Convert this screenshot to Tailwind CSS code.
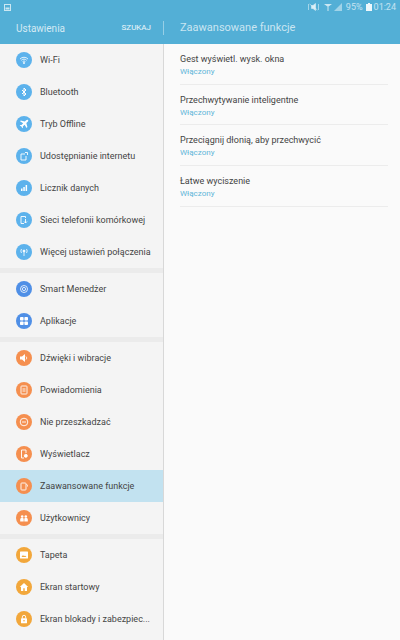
<!DOCTYPE html>
<html lang="pl">
<head>
    <meta charset="UTF-8">
    <meta name="viewport" content="width=device-width, initial-scale=1.0">
    <title>Ustawienia</title>
    <script src="https://cdn.jsdelivr.net/npm/@tailwindcss/browser@4"></script>
</head>
<body class="bg-[#fafafa] font-[Roboto,sans-serif] w-[400px] h-[640px] overflow-hidden">
    <!-- Header with status bar -->
    <div class="bg-[#53afd6] h-[44px] flex flex-col">
        <div class="h-[14px] flex items-center justify-between pl-1 pr-[4px]">
            <svg width="7" height="7" viewBox="0 0 7 7" class="opacity-70"><rect x="0.5" y="0.5" width="6" height="6" fill="none" stroke="#fff"/><rect x="1.5" y="3.5" width="4" height="2" fill="#fff"/></svg>
            <div class="flex items-center text-[9px] text-white/65 leading-none">
                <svg width="11" height="8" viewBox="0 0 11 8" class="mr-[5px]"><path d="M3.500 2.500h1.500L7.500 .5v7L5 5.500H3.500zM1.500 1l8 6M0.500 1v6M10.500 1v6" fill="#fff" stroke="#fff" stroke-width="0.6" opacity="0.8"/></svg>
                <svg width="8" height="8" viewBox="0 0 8 8" class="mr-[2px]"><path d="M0 1h8L4 4zM3.500 4h1v4h-1z" fill="#fff" opacity="0.7"/></svg>
                <svg width="8" height="8" viewBox="0 0 8 8" class="mr-[4px]"><path d="M0 8L8 0v8z" fill="#fff" opacity="0.45"/></svg>
                <span class="mr-[3px]">95%</span>
                <svg width="6" height="8" viewBox="0 0 6 8" class="mr-[2px]"><path d="M2 0h2v1h2v7H0V1h2z" fill="#fff" opacity="0.9"/></svg>
                <span>01:24</span>
            </div>
        </div>
        <div class="flex-1 flex items-center text-white">
            <div class="w-[164px] pl-4 pr-3 flex items-center justify-between h-[14px] border-r border-white/40 -mt-[2px]">
                <span class="text-[10px] text-white/75">Ustawienia</span>
                <span class="text-[8px] text-white/90">SZUKAJ</span>
            </div>
            <span class="pl-4 text-[11px] text-white/70 -mt-[2px]">Zaawansowane funkcje</span>
        </div>
    </div>

    <div class="flex h-[596px]">
        <!-- Sidebar list -->
        <div class="w-[164px] shrink-0 bg-[#f4f4f4] border-r border-[#d8d8d8] text-[9px] text-[#444444] overflow-hidden">
            <div class="h-[32px] flex items-center gap-2 pl-4">
                <span class="size-4 rounded-full bg-[#5cb2ec] flex items-center justify-center"><svg width="10" height="10" viewBox="0 0 10 10" fill="none" stroke="#fff" stroke-width="0.8"><path d="M1 4a5.500 5.500 0 0 1 8 0M2.300 5.300a3.700 3.700 0 0 1 5.400 0M3.600 6.600a2 2 0 0 1 2.800 0"/><circle cx="5" cy="8" r="0.6" fill="#fff"/></svg></span>
                <span class="mt-[2px]">Wi-Fi</span>
            </div>
            <div class="h-[32px] flex items-center gap-2 pl-4">
                <span class="size-4 rounded-full bg-[#5cb2ec] flex items-center justify-center"><svg width="10" height="10" viewBox="0 0 10 10" fill="none" stroke="#fff" stroke-width="1"><path d="M3 3l4 4-2 2V1l2 2-4 4"/></svg></span>
                <span class="mt-[2px]">Bluetooth</span>
            </div>
            <div class="h-[32px] flex items-center gap-2 pl-4">
                <span class="size-4 rounded-full bg-[#5cb2ec] flex items-center justify-center"><svg width="10" height="10" viewBox="0 0 10 10" fill="#fff"><path d="M9 1c-.5-.5-1.300-.3-1.800.2L5.800 2.600 1.800 1.500 1 2.300l3.200 2-1.700 1.800-1.200-.2-.6.6 1.700 1 1 1.700.6-.6-.2-1.200 1.800-1.700 2 3.200.8-.8-1.100-4 1.400-1.400C9.300 2.300 9.500 1.500 9 1z"/></svg></span>
                <span class="mt-[2px]">Tryb Offline</span>
            </div>
            <div class="h-[32px] flex items-center gap-2 pl-4">
                <span class="size-4 rounded-full bg-[#5cb2ec] flex items-center justify-center"><svg width="10" height="10" viewBox="0 0 10 10" fill="none" stroke="#fff" stroke-width="0.9"><path d="M6 3H2v6h5V5M6 1.500h2.500V4"/></svg></span>
                <span class="mt-[2px]">Udostępnianie internetu</span>
            </div>
            <div class="h-[32px] flex items-center gap-2 pl-4">
                <span class="size-4 rounded-full bg-[#5cb2ec] flex items-center justify-center"><svg width="10" height="10" viewBox="0 0 10 10" fill="#fff"><path d="M2 5.500h1.500V8H2zM4.300 4h1.500v4H4.300zM6.600 2h1.500v6H6.600z"/></svg></span>
                <span class="mt-[2px]">Licznik danych</span>
            </div>
            <div class="h-[32px] flex items-center gap-2 pl-4">
                <span class="size-4 rounded-full bg-[#5cb2ec] flex items-center justify-center"><svg width="10" height="10" viewBox="0 0 10 10" fill="none" stroke="#fff" stroke-width="0.9"><path d="M6.500 3V1.500h-4.500v7h3"/><path d="M6.500 4v4M5 6.500L6.500 8 8 6.500"/></svg></span>
                <span class="mt-[2px]">Sieci telefonii komórkowej</span>
            </div>
            <div class="h-[32px] flex items-center gap-2 pl-4">
                <span class="size-4 rounded-full bg-[#5cb2ec] flex items-center justify-center"><svg width="10" height="10" viewBox="0 0 10 10" fill="none" stroke="#fff" stroke-width="0.8"><circle cx="5" cy="4" r="1" fill="#fff"/><path d="M5 5v4M2.500 2a3.500 3.500 0 0 0 0 4M7.500 2a3.500 3.500 0 0 1 0 4"/></svg></span>
                <span class="mt-[2px]">Więcej ustawień połączenia</span>
            </div>

            <div class="h-[5px] bg-[#ebebeb]"></div>

            <div class="h-[32px] flex items-center gap-2 pl-4">
                <span class="size-4 rounded-full bg-[#4f8fe6] flex items-center justify-center"><svg width="10" height="10" viewBox="0 0 10 10" fill="none" stroke="#fff" stroke-width="0.8"><circle cx="5" cy="5" r="3.500"/><circle cx="5" cy="5" r="1.600"/></svg></span>
                <span class="mt-[2px]">Smart Menedżer</span>
            </div>
            <div class="h-[32px] flex items-center gap-2 pl-4">
                <span class="size-4 rounded-full bg-[#4f8fe6] flex items-center justify-center"><svg width="10" height="10" viewBox="0 0 10 10" fill="#fff"><rect x="1" y="1" width="3.600" height="3.600" rx="0.8"/><rect x="5.400" y="1" width="3.600" height="3.600" rx="0.8"/><rect x="1" y="5.400" width="3.600" height="3.600" rx="0.8"/><rect x="5.400" y="5.400" width="3.600" height="3.600" rx="0.8"/></svg></span>
                <span class="mt-[2px]">Aplikacje</span>
            </div>

            <div class="h-[5px] bg-[#ebebeb]"></div>

            <div class="h-[32px] flex items-center gap-2 pl-4">
                <span class="size-4 rounded-full bg-[#f58f4f] flex items-center justify-center"><svg width="10" height="10" viewBox="0 0 10 10" fill="#fff"><path d="M1 3.500h2L6 1v8L3 6.500H1z"/><path d="M7 3.500a2 2 0 0 1 0 3" fill="none" stroke="#fff" stroke-width="0.8"/></svg></span>
                <span class="mt-[2px]">Dźwięki i wibracje</span>
            </div>
            <div class="h-[32px] flex items-center gap-2 pl-4">
                <span class="size-4 rounded-full bg-[#f58f4f] flex items-center justify-center"><svg width="10" height="10" viewBox="0 0 10 10" fill="none" stroke="#fff" stroke-width="0.9"><rect x="2" y="1" width="6" height="8" rx="0.7"/><path d="M3.500 4h3M3.500 6h3"/></svg></span>
                <span class="mt-[2px]">Powiadomienia</span>
            </div>
            <div class="h-[32px] flex items-center gap-2 pl-4">
                <span class="size-4 rounded-full bg-[#f58f4f] flex items-center justify-center"><svg width="10" height="10" viewBox="0 0 10 10" fill="none" stroke="#fff" stroke-width="0.9"><circle cx="5" cy="5" r="3.800"/><path d="M3 5h4"/></svg></span>
                <span class="mt-[2px]">Nie przeszkadzać</span>
            </div>
            <div class="h-[32px] flex items-center gap-2 pl-4">
                <span class="size-4 rounded-full bg-[#f58f4f] flex items-center justify-center"><svg width="10" height="10" viewBox="0 0 10 10" fill="none" stroke="#fff" stroke-width="0.9"><path d="M5 9H2.500V1H7v3"/><circle cx="6.800" cy="6.800" r="1.500" fill="#fff"/></svg></span>
                <span class="mt-[2px]">Wyświetlacz</span>
            </div>
            <div class="h-[32px] flex items-center gap-2 pl-4 bg-[#c2e2f0]">
                <span class="size-4 rounded-full bg-[#f58f4f] flex items-center justify-center"><svg width="10" height="10" viewBox="0 0 10 10" fill="none" stroke="#fff" stroke-width="0.9"><rect x="2" y="2" width="5" height="7" rx="0.7"/><path d="M7.500 3.500c.6 0 1 .4 1 1v1"/></svg></span>
                <span class="mt-[2px]">Zaawansowane funkcje</span>
            </div>
            <div class="h-[32px] flex items-center gap-2 pl-4">
                <span class="size-4 rounded-full bg-[#f58f4f] flex items-center justify-center"><svg width="10" height="10" viewBox="0 0 10 10" fill="#fff"><circle cx="3.200" cy="3.500" r="1.300"/><circle cx="6.800" cy="3.500" r="1.300"/><path d="M1.200 8.500V6.500c0-1 .8-1.800 2-1.800s1.500.8 1.500 1.800v2zM5.300 8.500v-2c0-1 .3-1.800 1.500-1.800s2 .8 2 1.800v2z"/></svg></span>
                <span class="mt-[2px]">Użytkownicy</span>
            </div>

            <div class="h-[5px] bg-[#ebebeb]"></div>

            <div class="h-[32px] flex items-center gap-2 pl-4">
                <span class="size-4 rounded-full bg-[#f2a73b] flex items-center justify-center"><svg width="10" height="10" viewBox="0 0 10 10"><rect x="1" y="1.500" width="8" height="7" rx="0.6" fill="#fff"/><path d="M2.500 7l1.500-2 1 1.200 1-.8 1.500 1.600z" fill="#f2a73b"/></svg></span>
                <span class="mt-[2px]">Tapeta</span>
            </div>
            <div class="h-[32px] flex items-center gap-2 pl-4">
                <span class="size-4 rounded-full bg-[#f2a73b] flex items-center justify-center"><svg width="10" height="10" viewBox="0 0 10 10" fill="#fff"><path d="M5 1L.8 5H2v4h2.300V6.300h1.400V9H8V5h1.200z"/></svg></span>
                <span class="mt-[2px]">Ekran startowy</span>
            </div>
            <div class="h-[32px] flex items-center gap-2 pl-4">
                <span class="size-4 rounded-full bg-[#f2a73b] flex items-center justify-center"><svg width="10" height="10" viewBox="0 0 10 10"><path d="M3.300 4.500V3a1.700 1.700 0 0 1 3.400 0v1.500" fill="none" stroke="#fff" stroke-width="0.9"/><rect x="2" y="4.300" width="6" height="5" rx="0.6" fill="#fff"/><circle cx="5" cy="6.800" r="0.800" fill="#f2a73b"/></svg></span>
                <span class="mt-[2px]">Ekran blokady i zabezpiec...</span>
            </div>
        </div>

        <!-- Detail panel -->
        <div class="flex-1 px-4 pr-3">
            <div class="h-[40.700px] border-b border-[#ececec] flex flex-col justify-center pt-[2px]">
                <div class="text-[9px] leading-[13px] text-[#444444]">Gest wyświetl. wysk. okna</div>
                <div class="text-[8px] leading-[11px] text-[#5fb6d9]">Włączony</div>
            </div>
            <div class="h-[40.700px] border-b border-[#ececec] flex flex-col justify-center pt-[2px]">
                <div class="text-[9px] leading-[13px] text-[#444444]">Przechwytywanie inteligentne</div>
                <div class="text-[8px] leading-[11px] text-[#5fb6d9]">Włączony</div>
            </div>
            <div class="h-[40.700px] border-b border-[#ececec] flex flex-col justify-center pt-[2px]">
                <div class="text-[9px] leading-[13px] text-[#444444]">Przeciągnij dłonią, aby przechwycić</div>
                <div class="text-[8px] leading-[11px] text-[#5fb6d9]">Włączony</div>
            </div>
            <div class="h-[40.700px] border-b border-[#ececec] flex flex-col justify-center pt-[2px]">
                <div class="text-[9px] leading-[13px] text-[#444444]">Łatwe wyciszenie</div>
                <div class="text-[8px] leading-[11px] text-[#5fb6d9]">Włączony</div>
            </div>
        </div>
    </div>
</body>
</html>
